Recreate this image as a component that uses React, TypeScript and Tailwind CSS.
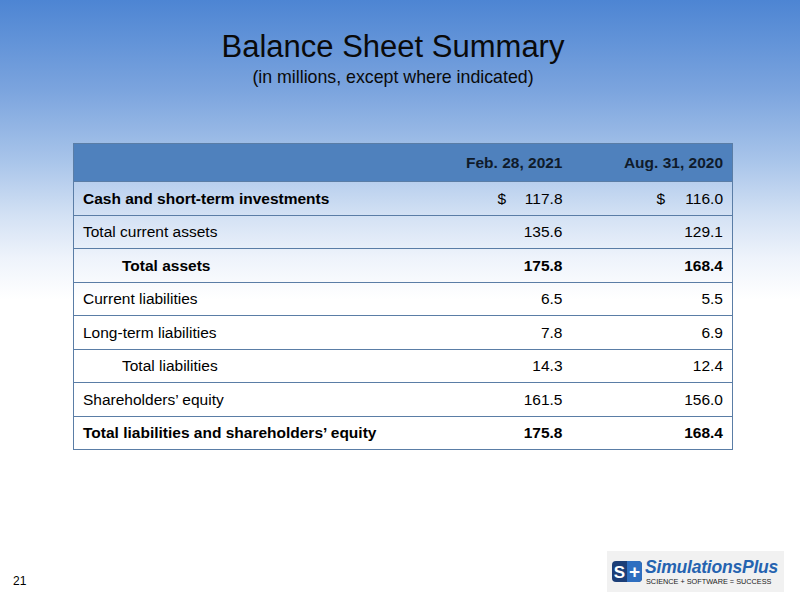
import React from "react";

const rows: { label: string; a: string; b: string; bold?: boolean; boldNums?: boolean; indent?: boolean; dollar?: boolean }[] = [
  { label: "Cash and short-term investments", a: "117.8", b: "116.0", bold: true, dollar: true },
  { label: "Total current assets", a: "135.6", b: "129.1" },
  { label: "Total assets", a: "175.8", b: "168.4", bold: true, boldNums: true, indent: true },
  { label: "Current liabilities", a: "6.5", b: "5.5" },
  { label: "Long-term liabilities", a: "7.8", b: "6.9" },
  { label: "Total liabilities", a: "14.3", b: "12.4", indent: true },
  { label: "Shareholders\u2019 equity", a: "161.5", b: "156.0" },
  { label: "Total liabilities and shareholders\u2019 equity", a: "175.8", b: "168.4", bold: true, boldNums: true },
];

function Logo() {
  return (
    <div className="w-[177px] h-[41px] bg-[#f1f1f1] flex items-center pl-[5px]">
      <svg width="30" height="21" viewBox="0 0 30 21" className="shrink-0">
        <rect x="0" y="0" width="30" height="21" rx="4" fill="#1c3f78" />
        <path d="M15 0 H26 a4 4 0 0 1 4 4 V17 a4 4 0 0 1 -4 4 H15 Z" fill="#2f6fc0" />
        <text x="7.5" y="16.5" textAnchor="middle" fontFamily="Liberation Sans, Arial, sans-serif" fontWeight="bold" fontSize="17" fill="#fff">S</text>
        <text x="22.5" y="17" textAnchor="middle" fontFamily="Liberation Sans, Arial, sans-serif" fontWeight="bold" fontSize="19" fill="#fff">+</text>
      </svg>
      <div className="flex flex-col ml-[3px] leading-none">
        <span className="text-[17.5px] italic font-bold text-[#2563b0] tracking-[-0.2px] leading-[18px]" style={{ fontFamily: '"Liberation Sans", Arial, sans-serif' }}>
          SimulationsPlus
        </span>
        <span className="text-[7.3px] text-[#222] mt-[2px] ml-[1px]" style={{ fontFamily: '"Liberation Sans", Arial, sans-serif' }}>
          SCIENCE + SOFTWARE = SUCCESS
        </span>
      </div>
    </div>
  );
}

export default function App() {
  const bd = "border-b border-[#5a7da6]";
  return (
    <div
      className="w-[800px] h-[599px] relative overflow-hidden bg-[linear-gradient(to_bottom,#4d85d3_0%,#7ba4de_15%,#a9c5ea_27%,#d3e1f4_36%,#eef3fb_43%,#ffffff_50%,#ffffff_100%)] text-black"
      style={{ fontFamily: '"Liberation Sans", Arial, sans-serif' }}
    >
      <div className="flex flex-col items-center pt-[28px] w-[786px]">
        <h1 className="text-[31px] leading-[38px] text-[#0a0a0a]">Balance Sheet Summary</h1>
        <p className="text-[17.75px] leading-[20px] text-[#0a0a0a] mt-[1px]">(in millions, except where indicated)</p>
      </div>

      <div className="ml-[73px] mt-[56px] w-[659px]">
        <table className="w-full table-fixed border-collapse border border-[#5a7da6] text-[15.5px]">
          <colgroup>
            <col className="w-[351px]" />
            <col className="w-[146px]" />
            <col className="w-[162px]" />
          </colgroup>
          <thead>
            <tr className="h-[38px] bg-[#4f81bd]">
              <th className={bd}></th>
              <th className={`${bd} text-right pr-[8px] font-bold text-[#0f1b2b]`}>Feb. 28, 2021</th>
              <th className={`${bd} text-right pr-[9px] font-bold text-[#0f1b2b]`}>Aug. 31, 2020</th>
            </tr>
          </thead>
          <tbody>
            {rows.map((r) => (
              <tr key={r.label} className="h-[33.5px]">
                <td className={`${bd} ${r.indent ? "pl-[48px]" : "pl-[9px]"} ${r.bold ? "font-bold" : ""} whitespace-nowrap`}>{r.label}</td>
                <td className={`${bd} pr-[8px] ${r.boldNums ? "font-bold" : ""}`}>
                  <div className="flex justify-between pl-[73px]">
                    <span>{r.dollar ? "$" : ""}</span>
                    <span>{r.a}</span>
                  </div>
                </td>
                <td className={`${bd} pr-[9px] ${r.boldNums ? "font-bold" : ""}`}>
                  <div className="flex justify-between pl-[86px]">
                    <span>{r.dollar ? "$" : ""}</span>
                    <span>{r.b}</span>
                  </div>
                </td>
              </tr>
            ))}
          </tbody>
        </table>
      </div>

      <div className="absolute left-[13px] top-[574px] text-[12px] leading-[14px]">21</div>
      <div className="absolute left-[607px] top-[551px]">
        <Logo />
      </div>
    </div>
  );
}
